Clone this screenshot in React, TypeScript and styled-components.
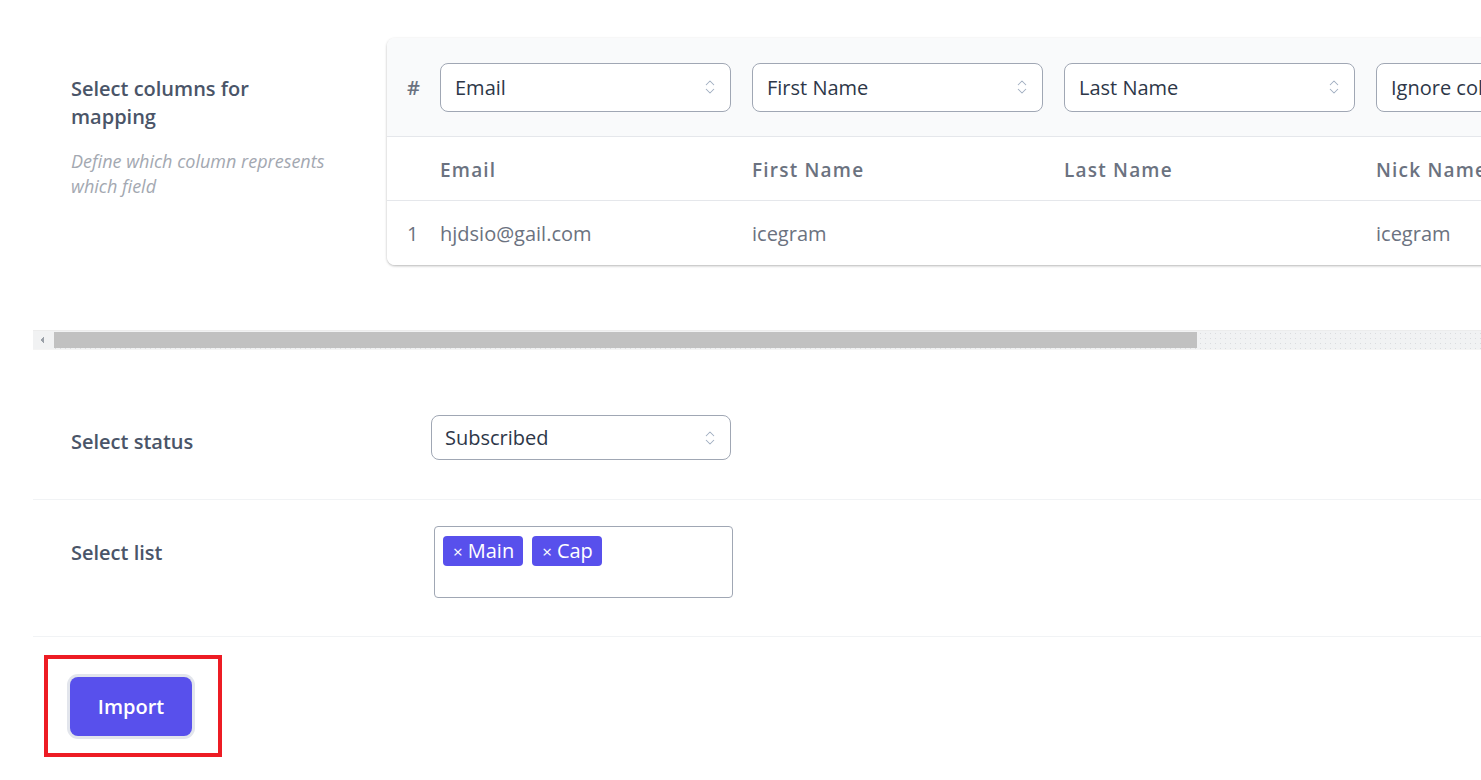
import React from "react";
import styled, { createGlobalStyle } from "styled-components";
import { ChevronsUpDown } from "lucide-react";

const GlobalStyle = createGlobalStyle`
  html, body {
    margin: 0;
    padding: 0;
    background: #ffffff;
    overflow: hidden;
  }
  body {
    font-family: "Open Sans", "Noto Sans", Arial, sans-serif;
    color: #4a5568;
  }
  * {
    box-sizing: border-box;
  }
`;

const Page = styled.div`
  padding-left: 33px;
  width: 100%;
`;

const MappingViewport = styled.div`
  overflow: hidden;
`;

const MappingRow = styled.div`
  display: flex;
  align-items: flex-start;
  padding: 38px 0 65px 38px;
  width: max-content;
`;

const LabelBlock = styled.div`
  width: 265px;
  flex-shrink: 0;
  padding-top: 37px;
`;

const Title = styled.div`
  font-size: 20px;
  line-height: 28px;
  font-weight: 600;
  color: #4a5568;
`;

const Hint = styled.div`
  margin-top: 18px;
  font-size: 18px;
  line-height: 25px;
  font-style: italic;
  color: #a3a8b1;
`;

const Card = styled.div`
  margin-left: 51px;
  width: 1613px;
  flex-shrink: 0;
  background: #ffffff;
  border-radius: 8px;
  overflow: hidden;
  box-shadow: 0 1px 3px rgba(0, 0, 0, 0.2), 0 1px 2px rgba(0, 0, 0, 0.1);
`;

const TableRow = styled.div<{ $head?: boolean; $last?: boolean }>`
  display: grid;
  grid-template-columns: 53px repeat(5, 312px);
  align-items: center;
  height: ${(p) => (p.$head ? "99px" : "64px")};
  background: ${(p) => (p.$head ? "#f9fafb" : "#ffffff")};
  border-bottom: ${(p) => (p.$last ? "none" : "1px solid #e5e7eb")};
`;

const IndexCell = styled.div<{ $bold?: boolean }>`
  padding-left: 20px;
  font-size: 20px;
  font-weight: ${(p) => (p.$bold ? 600 : 400)};
  color: #6b7280;
`;

const HeadCell = styled.div`
  padding: 2px 21px 0 0;
  font-size: 19px;
  font-weight: 600;
  letter-spacing: 1.2px;
  color: #6b7280;
  white-space: nowrap;
`;

const DataCell = styled.div`
  font-size: 20px;
  color: #6b7280;
  white-space: nowrap;
`;

const SelectWrap = styled.div<{ $width?: number; $height?: number }>`
  position: relative;
  width: ${(p) => p.$width ?? 291}px;
  height: ${(p) => p.$height ?? 49}px;
`;

const NativeSelect = styled.select<{ $pad?: number }>`
  appearance: none;
  -webkit-appearance: none;
  width: 100%;
  height: 100%;
  padding: 0 36px 0 ${(p) => p.$pad ?? 14}px;
  border: 1px solid #a0a7b4;
  border-radius: 8px;
  background: #ffffff;
  font-family: "Open Sans", "Noto Sans", Arial, sans-serif;
  font-size: 20px;
  color: #2d3748;
  outline: none;
`;

const SelectIcon = styled.span`
  position: absolute;
  right: 12px;
  top: 50%;
  transform: translateY(-50%);
  display: flex;
  color: #a0aec0;
  pointer-events: none;
`;

const ScrollTrack = styled.div`
  display: flex;
  height: 20px;
  background-color: #f1f2f3;
  background-image: radial-gradient(#dadcdf 0.8px, transparent 1px);
  background-size: 5px 5px;
  border-top: 1px solid #ececec;
  border-bottom: 1px solid #f4f4f4;
`;

const ScrollButton = styled.div`
  width: 21px;
  flex-shrink: 0;
  background-color: #f1f2f3;
  background-image: linear-gradient(to top left, #9aa0a8 50%, transparent 50%),
    linear-gradient(to bottom left, #9aa0a8 50%, transparent 50%);
  background-size: 4px 4px, 4px 4px;
  background-position: 7px 5px, 7px 9px;
  background-repeat: no-repeat;
`;

const ScrollThumb = styled.div`
  width: 1143px;
  margin: 1px 0;
  background: #c1c1c1;
`;

const FieldRow = styled.div<{ $top: number; $bottom: number }>`
  display: grid;
  grid-template-columns: 360px 1fr;
  align-items: start;
  padding: ${(p) => p.$top}px 0 ${(p) => p.$bottom}px 38px;
  border-bottom: 1px solid #f1f3f5;
`;

const FieldLabel = styled.div`
  padding-top: 13px;
  font-size: 20px;
  line-height: 28px;
  font-weight: 600;
  color: #4a5568;
`;

const ListBox = styled.div`
  margin-left: 3px;
  width: 299px;
  height: 72px;
  padding: 9px 8px;
  border: 1px solid #a0a7b4;
  border-radius: 4px;
  display: flex;
  align-items: flex-start;
  gap: 9px;
`;

const Tag = styled.span`
  display: inline-flex;
  align-items: center;
  gap: 5px;
  height: 30px;
  padding: 0 9px 0 10px;
  border-radius: 4px;
  background: #5850ec;
  color: #ffffff;
  font-size: 20px;
  line-height: 1;
`;

const TagX = styled.span`
  font-size: 17px;
`;

const Highlight = styled.div`
  display: inline-block;
  margin: 18px 0 0 11px;
  padding: 15px 23px 14px 19px;
  border: 4px solid #ed1c24;
`;

const ImportButton = styled.button`
  display: block;
  margin: 3px;
  width: 122px;
  height: 59px;
  border: none;
  border-radius: 8px;
  background: #5850ec;
  box-shadow: 0 0 0 3px #e2e5ec;
  color: #ffffff;
  font-family: "Open Sans", "Noto Sans", Arial, sans-serif;
  font-size: 20px;
  font-weight: 600;
  cursor: pointer;
`;

type Column = { field: string; header: string; value: string };

const columns: Column[] = [
  { field: "Email", header: "Email", value: "hjdsio@gail.com" },
  { field: "First Name", header: "First Name", value: "icegram" },
  { field: "Last Name", header: "Last Name", value: "" },
  { field: "Ignore column", header: "Nick Name", value: "icegram" },
  { field: "Ignore column", header: "Status", value: "subscribed" },
];

const fieldOptions = ["Email", "First Name", "Last Name", "Ignore column"];

function Select({
  value,
  options,
  width,
  height,
  pad,
}: {
  value: string;
  options: string[];
  width?: number;
  height?: number;
  pad?: number;
}) {
  return (
    <SelectWrap $width={width} $height={height}>
      <NativeSelect $pad={pad} defaultValue={value}>
        {options.map((o) => (
          <option key={o} value={o}>
            {o}
          </option>
        ))}
      </NativeSelect>
      <SelectIcon>
        <ChevronsUpDown size={18} strokeWidth={1.4} />
      </SelectIcon>
    </SelectWrap>
  );
}

export default function App() {
  return (
    <Page>
      <GlobalStyle />
      <MappingViewport>
        <MappingRow>
          <LabelBlock>
            <Title>Select columns for mapping</Title>
            <Hint>Define which column represents which field</Hint>
          </LabelBlock>
          <Card>
            <TableRow $head>
              <IndexCell $bold>#</IndexCell>
              {columns.map((c, i) => (
                <Select key={i} value={c.field} options={fieldOptions} />
              ))}
            </TableRow>
            <TableRow>
              <div />
              {columns.map((c, i) => (
                <HeadCell key={i}>{c.header}</HeadCell>
              ))}
            </TableRow>
            <TableRow $last>
              <IndexCell>1</IndexCell>
              {columns.map((c, i) => (
                <DataCell key={i}>{c.value}</DataCell>
              ))}
            </TableRow>
          </Card>
        </MappingRow>
      </MappingViewport>
      <ScrollTrack>
        <ScrollButton />
        <ScrollThumb />
      </ScrollTrack>

      <FieldRow $top={65} $bottom={39}>
        <FieldLabel>Select status</FieldLabel>
        <Select
          value="Subscribed"
          options={["Subscribed", "Unsubscribed", "Unconfirmed"]}
          width={300}
          height={45}
          pad={13}
        />
      </FieldRow>
      <FieldRow $top={26} $bottom={38}>
        <FieldLabel>Select list</FieldLabel>
        <ListBox>
          <Tag>
            <TagX>×</TagX>Main
          </Tag>
          <Tag>
            <TagX>×</TagX>Cap
          </Tag>
        </ListBox>
      </FieldRow>

      <Highlight>
        <ImportButton>Import</ImportButton>
      </Highlight>
    </Page>
  );
}
